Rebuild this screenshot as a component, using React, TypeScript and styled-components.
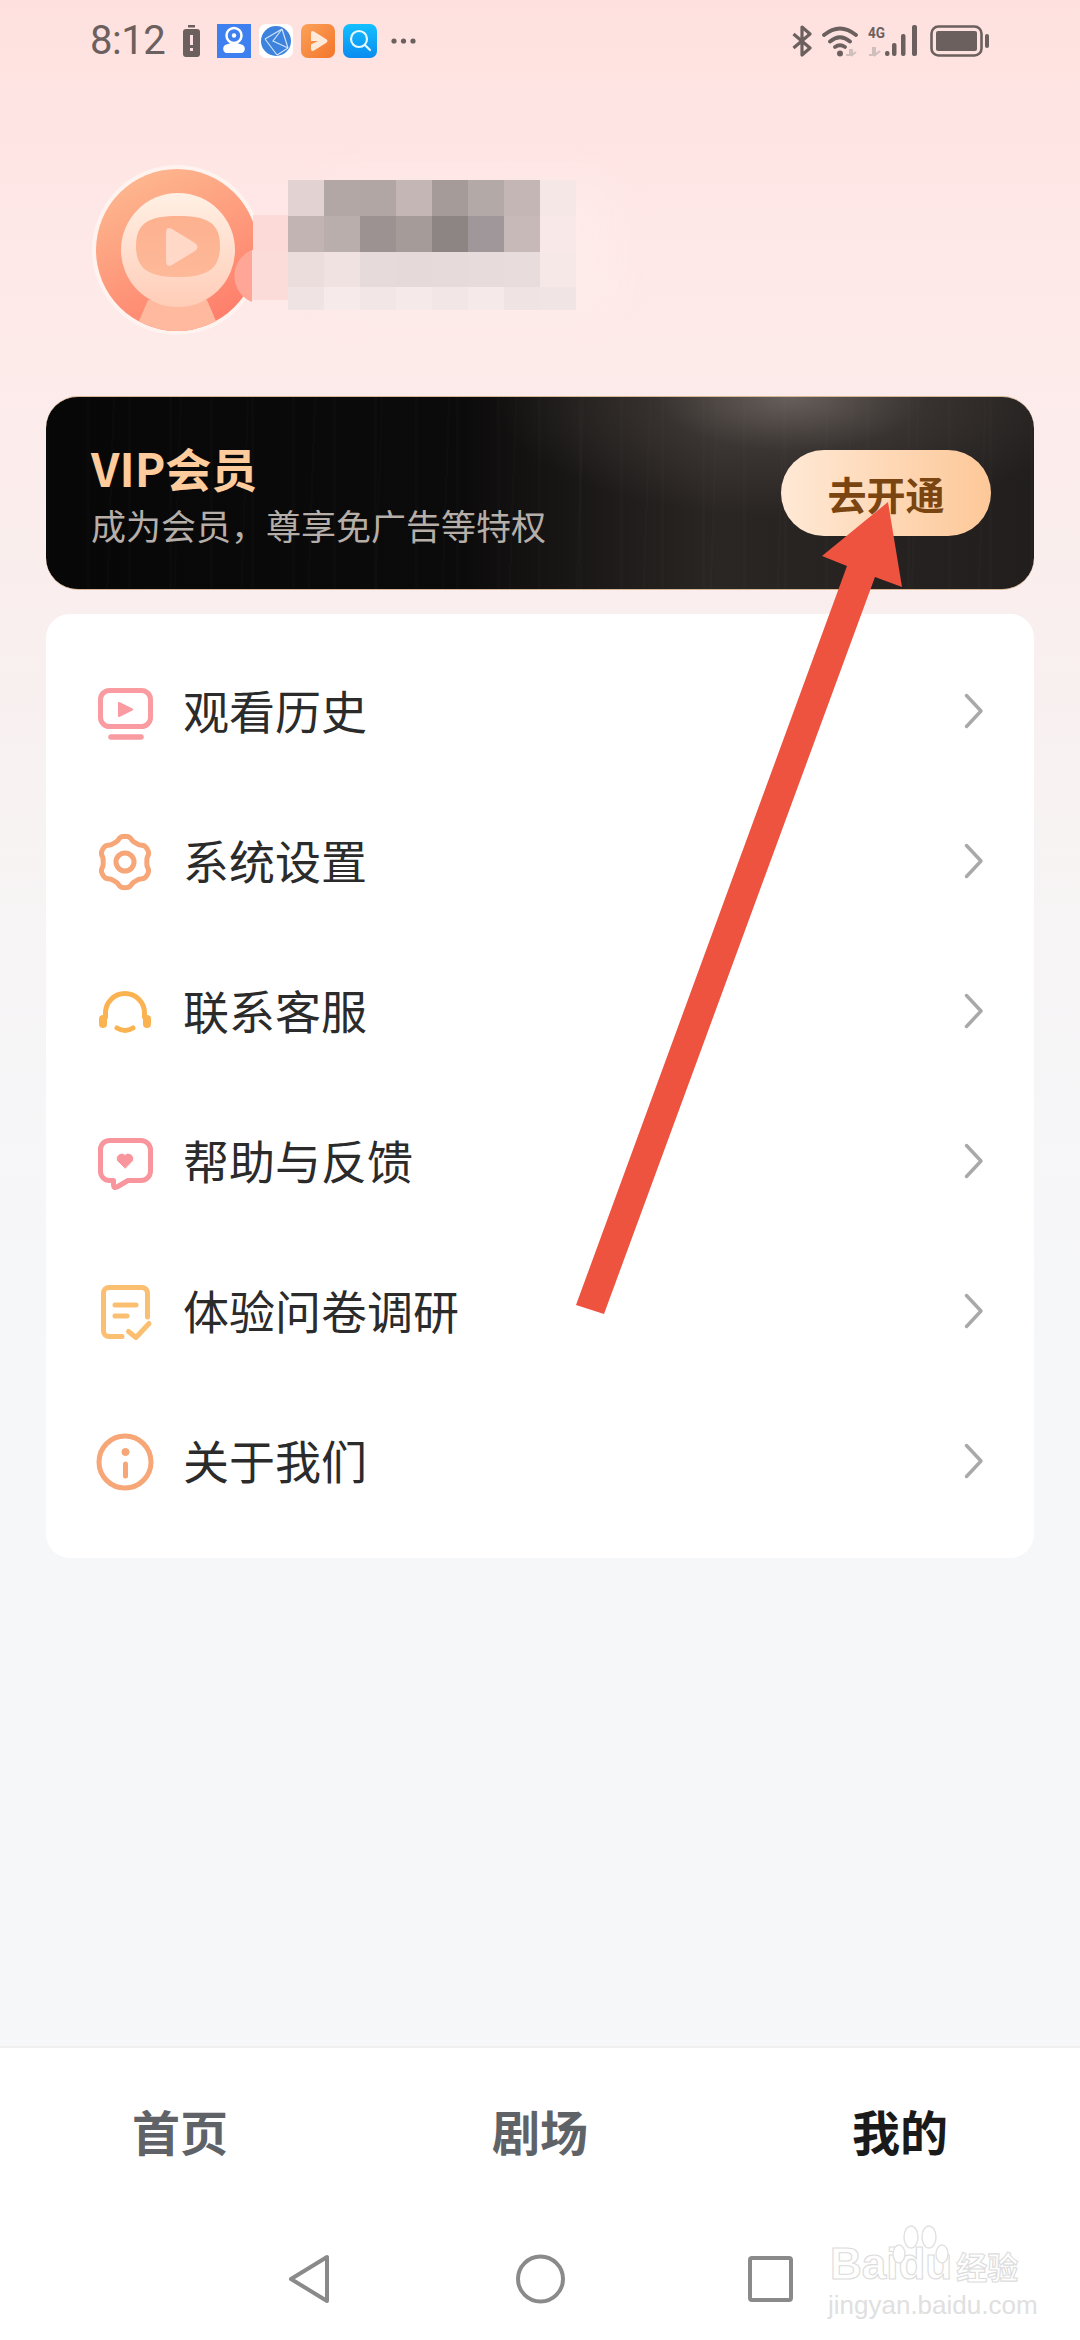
import styled, { createGlobalStyle } from "styled-components";

const GlobalStyle = createGlobalStyle`
  html, body {
    margin: 0;
    padding: 0;
    background: #f6f7f9;
  }
  * {
    box-sizing: border-box;
  }
`;

const Page = styled.div`
  position: relative;
  display: flex;
  flex-direction: column;
  width: 1080px;
  height: 2340px;
  overflow: hidden;
  font-family: "Noto Sans CJK SC", "Noto Sans", sans-serif;
  background: linear-gradient(
    180deg,
    #fee1df 0,
    #fee9e8 260px,
    #f9efee 620px,
    #f7f5f6 950px,
    #f6f7f9 1350px
  );
`;

const StatusBar = styled.div`
  display: flex;
  justify-content: space-between;
  align-items: center;
  height: 82px;
  padding: 0 91px 0 90px;
`;

const StatusGroup = styled.div`
  display: flex;
  align-items: center;
`;

const Time = styled.span`
  width: 75px;
  margin-right: 18px;
  font-family: Roboto, sans-serif;
  font-size: 40px;
  line-height: 38px;
  letter-spacing: -0.5px;
  color: #6b605e;
`;

const AppIcon = styled.svg<{ $gap?: number }>`
  display: block;
  width: 34px;
  height: 34px;
  margin-right: ${({ $gap }) => $gap ?? 8}px;
`;

const StatusGlyph = styled.svg<{ $gap?: number }>`
  display: block;
  margin-right: ${({ $gap }) => $gap ?? 0}px;
`;

const NetworkLabel = styled.text`
  font-family: Roboto, sans-serif;
  font-size: 15px;
  font-weight: 700;
  fill: #6b605e;
`;

const Profile = styled.div`
  display: flex;
  align-items: flex-start;
  height: 314px;
  padding: 83px 0 0 90px;
`;

const Avatar = styled.svg`
  display: block;
  width: 198px;
  height: 170px;
`;

const Mosaic = styled.div`
  display: grid;
  grid-template-columns: repeat(8, 36px);
  grid-template-rows: 36px 36px 35px 23px;
  margin-top: 15px;
  box-shadow: 36px 0 40px rgba(255, 240, 240, 0.4);
`;

const MosaicCell = styled.div<{ $bg: string }>`
  background: ${({ $bg }) => $bg};
`;

const VipCard = styled.div`
  display: flex;
  justify-content: space-between;
  align-items: center;
  height: 194px;
  margin: 0 46px;
  padding: 0 43px 0 45px;
  border-top: 1px solid #d8b796;
  border-bottom: 1px solid #d8b796;
  border-radius: 32px;
  background:
    radial-gradient(ellipse 300px 120px at 745px 0, rgba(125, 115, 110, 0.75) 0, rgba(90, 82, 78, 0.35) 45%, transparent 100%),
    repeating-linear-gradient(90deg, rgba(255, 255, 255, 0.012) 0 3px, transparent 3px 41px),
    repeating-linear-gradient(92deg, rgba(255, 255, 255, 0.01) 0 2px, transparent 2px 67px),
    linear-gradient(90deg, #070707 0, #0c0b0b 42%, #2a2624 68%, #211e1d 100%);
`;

const VipText = styled.div`
  display: flex;
  flex-direction: column;
`;

const VipTitle = styled.div`
  font-size: 46px;
  line-height: 56px;
  font-weight: 700;
  color: #fdcb9c;
`;

const VipSubtitle = styled.div`
  margin-top: 7px;
  font-size: 35px;
  line-height: 46px;
  color: #b6aea8;
`;

const OpenButton = styled.div`
  display: flex;
  justify-content: center;
  align-items: center;
  width: 210px;
  height: 86px;
  border-radius: 43px;
  font-size: 39px;
  font-weight: 700;
  color: #7a4510;
  background: linear-gradient(90deg, #ffe9d6 0, #fdc898 100%);
`;

const MenuCard = styled.div`
  display: flex;
  flex-direction: column;
  margin: 24px 46px 0;
  padding: 22px 0;
  border-radius: 24px;
  background: #ffffff;
`;

const MenuRow = styled.div`
  display: flex;
  align-items: center;
  height: 150px;
  padding: 0 50px 0 49px;
`;

const MenuIcon = styled.svg`
  display: block;
  width: 60px;
  height: 60px;
  flex-shrink: 0;
  fill: none;
  stroke-linecap: round;
  stroke-linejoin: round;
  stroke-width: 5;
`;

const MenuLabel = styled.span`
  flex: 1;
  margin-left: 28px;
  padding-bottom: 4px;
  font-size: 46px;
  line-height: 60px;
  color: #2b2b2b;
`;

const Chevron = styled.svg`
  display: block;
  width: 20px;
  height: 36px;
  fill: none;
  stroke: #a9a9a9;
  stroke-width: 3.5;
  stroke-linecap: round;
  stroke-linejoin: round;
`;

const Spacer = styled.div`
  flex: 1;
`;

const TabBar = styled.div`
  display: grid;
  grid-template-columns: repeat(3, 1fr);
  align-items: center;
  height: 171px;
  padding-bottom: 6px;
  border-top: 2px solid #f0f0f1;
  background: #ffffff;
`;

const Tab = styled.div<{ $active?: boolean }>`
  text-align: center;
  font-size: 48px;
  font-weight: 700;
  color: ${({ $active }) => ($active ? "#1a1a1a" : "#5f6368")};
`;

const NavBar = styled.div`
  display: flex;
  align-items: center;
  gap: 183px;
  height: 123px;
  padding: 0 0 0 288px;
  background: #ffffff;
`;

const NavIcon = styled.svg`
  display: block;
  fill: none;
  stroke: #8a8a8a;
  stroke-width: 4;
  stroke-linejoin: round;
`;

const Watermark = styled.div`
  position: absolute;
  left: 828px;
  top: 2225px;
  width: 200px;
  height: 95px;
`;

const WatermarkPaw = styled.svg`
  position: absolute;
  left: 62px;
  top: 0;
  width: 60px;
  height: 62px;
  fill: #ffffff;
  stroke: #e2e2e2;
  stroke-width: 1.5;
`;

const WatermarkBrand = styled.div`
  position: absolute;
  left: 2px;
  top: 14px;
  display: flex;
  align-items: baseline;
  font-family: "Liberation Sans", sans-serif;
  font-size: 44px;
  line-height: 50px;
  font-weight: 700;
  color: #ffffff;
  -webkit-text-stroke: 1.1px #dcdcdc;
`;

const WatermarkCn = styled.span`
  margin-left: 4px;
  font-family: "Noto Sans CJK SC", sans-serif;
  font-size: 31px;
`;

const WatermarkUrl = styled.div`
  position: absolute;
  left: 0;
  top: 67px;
  font-family: "Liberation Sans", sans-serif;
  font-size: 26px;
  line-height: 26px;
  color: #e0e0e0;
  white-space: nowrap;
`;

const ArrowOverlay = styled.svg`
  position: absolute;
  left: 560px;
  top: 490px;
  width: 360px;
  height: 840px;
`;

const mosaicColors = [
  "#e2d3d2", "#b3a7a5", "#b2a6a4", "#c4b6b5", "#a59b99", "#b3a9a7", "#c3b6b5", "#f5e7e6",
  "#c2b4b3", "#baaead", "#9c9291", "#a59c9a", "#8c8583", "#a0979a", "#c6b9b8", "#f8e8e7",
  "#eadddc", "#efe2e1", "#e6dada", "#e6d9d9", "#e6dada", "#e7dbdb", "#e8dcdc", "#f5e8e7",
  "#f0e3e3", "#f6eaea", "#f3e6e6", "#f5e9e9", "#f3e6e6", "#f5e9e9", "#f0e3e3", "#f1e4e4",
];

// six flat lobes, shallow dips between them
const gearPath = () => {
  const points: string[] = [];
  const steep = Math.tanh(1.6);
  for (let i = 0; i < 144; i++) {
    const a = (i / 144) * Math.PI * 2;
    const r = 23.75 + (1.9 * Math.tanh(1.6 * Math.cos(6 * a))) / steep;
    const x = 30 + r * Math.sin(a);
    const y = 31 - r * Math.cos(a);
    points.push(`${x.toFixed(2)} ${y.toFixed(2)}`);
  }
  return `M${points.join("L")}Z`;
};

const HistoryIcon = () => (
  <MenuIcon viewBox="0 0 60 60" stroke="#f99ba0">
    <rect x="5.5" y="9.5" width="50" height="36" rx="9" />
    <path d="M16 56H46" strokeWidth="5.5" />
    <path d="M24 22L37 28.5L24 35Z" fill="#f99ba0" strokeWidth="2" />
  </MenuIcon>
);

const SettingsIcon = () => (
  <MenuIcon viewBox="0 0 60 60" stroke="#f7a677">
    <path d={gearPath()} />
    <circle cx="30" cy="31" r="9" />
  </MenuIcon>
);

const ServiceIcon = () => (
  <MenuIcon viewBox="0 0 60 60" stroke="#fbb352">
    <path d="M10.5 36V32A19.5 19.5 0 0 1 49.5 32V36" />
    <path d="M8 38V43M52 38V43" strokeWidth="8" />
    <path d="M22 47Q30 52 38 47" />
  </MenuIcon>
);

const FeedbackIcon = () => (
  <MenuIcon viewBox="0 0 60 60" stroke="#f9959c">
    <path d="M14.5 9.5H46A9.5 9.5 0 0 1 55.5 19V40A9.5 9.5 0 0 1 46 49.5H33L22 56Q18.5 57.5 18.5 54V49.5H14.5A9 9 0 0 1 5.5 40V19A9 9 0 0 1 14.5 9.5Z" />
    <path d="M30 37L22.5 29.5A4.6 4.6 0 0 1 30 24.5A4.6 4.6 0 0 1 37.5 29.5Z" fill="#f9959c" strokeWidth="1" />
  </MenuIcon>
);

const SurveyIcon = () => (
  <MenuIcon viewBox="0 0 60 60" stroke="#fbbf72">
    <path d="M52.5 36V12A5.5 5.5 0 0 0 47 6.5H14A5.5 5.5 0 0 0 8.5 12V50A5.5 5.5 0 0 0 14 55.5H27" />
    <path d="M20 24H41M20 35H32" />
    <path d="M33.5 50.5L41 56.5L54 42.5" />
  </MenuIcon>
);

const AboutIcon = () => (
  <MenuIcon viewBox="0 0 60 60" stroke="#f7a677">
    <circle cx="30" cy="31" r="26" />
    <circle cx="30.5" cy="21" r="3.6" fill="#f7a677" strokeWidth="1" />
    <path d="M30.5 33V45" />
  </MenuIcon>
);

const menuItems = [
  { label: "观看历史", icon: <HistoryIcon /> },
  { label: "系统设置", icon: <SettingsIcon /> },
  { label: "联系客服", icon: <ServiceIcon /> },
  { label: "帮助与反馈", icon: <FeedbackIcon /> },
  { label: "体验问卷调研", icon: <SurveyIcon /> },
  { label: "关于我们", icon: <AboutIcon /> },
];

const StatusLeft = () => (
  <StatusGroup>
    <Time>8:12</Time>
    <StatusGlyph width="17" height="32" viewBox="0 0 17 32" $gap={17}>
      <rect x="5" y="0" width="7" height="2.5" fill="#6b605e" />
      <rect x="0" y="4" width="17" height="28" rx="3" fill="#6b605e" />
      <rect x="7" y="10" width="3" height="10" fill="#fde2df" />
      <rect x="7" y="23" width="3" height="3" fill="#fde2df" />
    </StatusGlyph>
    <AppIcon viewBox="0 0 34 34">
      <rect width="34" height="34" fill="#3f80f0" />
      <circle cx="17" cy="11.5" r="7.5" fill="none" stroke="#fff" strokeWidth="2.5" />
      <circle cx="17" cy="11.5" r="2.2" fill="#fff" />
      <path d="M9 29A4.5 4.5 0 0 1 9.5 20.5Q17 17 24.5 20.5A4.5 4.5 0 0 1 25 29Z" fill="#fff" />
    </AppIcon>
    <AppIcon viewBox="0 0 34 34">
      <rect width="34" height="34" rx="7" fill="#ffffff" />
      <circle cx="17" cy="17" r="15" fill="#3d82dc" />
      <path d="M6 15L23 5M6 15L18 31M23 5L29 24M29 24L18 31M23 5L14 17L29 24" fill="none" stroke="#cfe2f8" strokeWidth="1.2" />
    </AppIcon>
    <AppIcon viewBox="0 0 34 34">
      <defs>
        <linearGradient id="orangeApp" x1="0" y1="0" x2="1" y2="1">
          <stop offset="0" stopColor="#fca25a" />
          <stop offset="1" stopColor="#f3752a" />
        </linearGradient>
      </defs>
      <rect width="34" height="34" rx="7" fill="url(#orangeApp)" />
      <path d="M10 9Q10 6 13 7.5L25 15Q28 17 25 19L13 26.5Q10 28 10 25V20.5L17 17L10 17Z" fill="#ffe9d8" />
    </AppIcon>
    <AppIcon viewBox="0 0 34 34" $gap={14}>
      <defs>
        <linearGradient id="cyanApp" x1="0" y1="0" x2="0" y2="1">
          <stop offset="0" stopColor="#13c0ff" />
          <stop offset="1" stopColor="#0a8bf0" />
        </linearGradient>
      </defs>
      <rect width="34" height="34" rx="7" fill="url(#cyanApp)" />
      <circle cx="16" cy="15" r="8" fill="none" stroke="#e6f8ff" strokeWidth="2.2" />
      <path d="M22 21L27 26" stroke="#e6f8ff" strokeWidth="2.2" strokeLinecap="round" />
    </AppIcon>
    <StatusGlyph width="25" height="6" viewBox="0 0 25 6">
      <circle cx="3" cy="3" r="2.6" fill="#6b605e" />
      <circle cx="12.5" cy="3" r="2.6" fill="#6b605e" />
      <circle cx="22" cy="3" r="2.6" fill="#6b605e" />
    </StatusGlyph>
  </StatusGroup>
);

const StatusRight = () => (
  <StatusGroup>
    <StatusGlyph width="20" height="32" viewBox="0 0 20 32" $gap={10}>
      <path d="M1.5 9L18 23L10 30V2L18 9L1.5 23" fill="none" stroke="#6b605e" strokeWidth="3.2" strokeLinejoin="round" />
    </StatusGlyph>
    <StatusGlyph width="36" height="32" viewBox="0 0 36 32" $gap={10}>
      <path d="M2 10Q18 -3 34 10M8 16.5Q18 8 28 16.5M13 22Q18 18.5 23 22" fill="none" stroke="#6b605e" strokeWidth="3.8" strokeLinecap="round" />
      <circle cx="18" cy="28.5" r="3" fill="#6b605e" />
      <path d="M24 30H28V24M30 24V30L34 27" fill="none" stroke="#cfbfbd" strokeWidth="2" />
    </StatusGlyph>
    <StatusGlyph width="49" height="32" viewBox="0 0 49 32" $gap={13}>
      <NetworkLabel x="0" y="13" textLength="17" lengthAdjust="spacingAndGlyphs">4G</NetworkLabel>
      <path d="M1 30H5V22M7 22V30L12 26" fill="none" stroke="#cfbfbd" strokeWidth="2" />
      <rect x="17" y="26" width="4.5" height="5" rx="2" fill="#6b605e" />
      <rect x="24" y="18" width="4.5" height="13" rx="2" fill="#6b605e" />
      <rect x="33" y="9" width="4.5" height="22" rx="2" fill="#6b605e" />
      <rect x="44" y="0" width="5" height="31" rx="2" fill="#6b605e" />
    </StatusGlyph>
    <StatusGlyph width="59" height="32" viewBox="0 0 59 32">
      <rect x="1.5" y="1.5" width="50" height="29" rx="7" fill="none" stroke="#6b605e" strokeWidth="2.6" />
      <rect x="6" y="6" width="41" height="20" rx="2" fill="#6b605e" />
      <rect x="55" y="9" width="4" height="14" rx="2" fill="#6b605e" />
    </StatusGlyph>
  </StatusGroup>
);

const AvatarArt = () => (
  <Avatar viewBox="90 165 198 170">
    <defs>
      <linearGradient id="ringFill" x1="0.3" y1="0" x2="0.8" y2="1">
        <stop offset="0" stopColor="#fdb78f" />
        <stop offset="1" stopColor="#ff7a68" />
      </linearGradient>
      <linearGradient id="headFill" x1="0" y1="0" x2="0" y2="1">
        <stop offset="0" stopColor="#fff0e4" />
        <stop offset="1" stopColor="#ffcdb8" />
      </linearGradient>
      <linearGradient id="screenFill" x1="0" y1="0" x2="0" y2="1">
        <stop offset="0" stopColor="#fdb18f" />
        <stop offset="1" stopColor="#fdb999" />
      </linearGradient>
      <clipPath id="faceClip">
        <circle cx="177" cy="250" r="81" />
      </clipPath>
    </defs>
    <circle cx="177" cy="250" r="85" fill="#fff3f0" />
    <circle cx="177" cy="250" r="81" fill="url(#ringFill)" />
    <g clipPath="url(#faceClip)">
      <path d="M148 300H207L222 335H133Z" fill="#ffb99f" />
    </g>
    <circle cx="178" cy="250" r="57" fill="url(#headFill)" />
    <path d="M136 246C136 222 150 216 178 216C206 216 220 222 220 246C220 270 206 277 178 277C150 277 136 270 136 246Z" fill="url(#screenFill)" />
    <path d="M166 233Q166 226 172 229L195 243Q200 247 195 251L172 265Q166 268 166 261Z" fill="#ffd8c7" />
    <rect x="253" y="215" width="35" height="35" fill="#fcdad7" />
    <path d="M252 250A28 28 0 0 0 252 302Z" fill="#ffa696" />
    <rect x="252" y="250" width="36" height="50" fill="#fcdcd9" />
  </Avatar>
);

export default function App() {
  return (
    <Page>
      <GlobalStyle />
      <StatusBar>
        <StatusLeft />
        <StatusRight />
      </StatusBar>
      <Profile>
        <AvatarArt />
        <Mosaic>
          {mosaicColors.map((color, i) => (
            <MosaicCell key={i} $bg={color} />
          ))}
        </Mosaic>
      </Profile>
      <VipCard>
        <VipText>
          <VipTitle>VIP会员</VipTitle>
          <VipSubtitle>成为会员，尊享免广告等特权</VipSubtitle>
        </VipText>
        <OpenButton>去开通</OpenButton>
      </VipCard>
      <MenuCard>
        {menuItems.map((item) => (
          <MenuRow key={item.label}>
            {item.icon}
            <MenuLabel>{item.label}</MenuLabel>
            <Chevron viewBox="0 0 20 36">
              <path d="M2.5 2.5L17 18L2.5 33.5" />
            </Chevron>
          </MenuRow>
        ))}
      </MenuCard>
      <Spacer />
      <TabBar>
        <Tab>首页</Tab>
        <Tab>剧场</Tab>
        <Tab $active>我的</Tab>
      </TabBar>
      <NavBar>
        <NavIcon width="45" height="50" viewBox="0 0 45 50">
          <path d="M39 3V47L3 25Z" />
        </NavIcon>
        <NavIcon width="49" height="50" viewBox="0 0 49 50">
          <circle cx="24.5" cy="25" r="22.5" />
        </NavIcon>
        <NavIcon width="45" height="46" viewBox="0 0 45 46">
          <rect x="2" y="2" width="41" height="42" rx="2" />
        </NavIcon>
      </NavBar>
      <Watermark>
        <WatermarkBrand>
          Baidu<WatermarkCn>经验</WatermarkCn>
        </WatermarkBrand>
        <WatermarkPaw viewBox="0 0 60 62">
          <ellipse cx="21" cy="12" rx="7" ry="11" />
          <ellipse cx="39" cy="12" rx="7" ry="11" />
          <ellipse cx="9" cy="29" rx="6" ry="9" />
          <ellipse cx="52" cy="29" rx="6" ry="9" />
        </WatermarkPaw>
        <WatermarkUrl>jingyan.baidu.com</WatermarkUrl>
      </Watermark>
      <ArrowOverlay viewBox="560 490 360 840">
        <polygon
          points="888,502 902,587 875,577 604,1314 576,1305 847,566 822,556"
          fill="#ee5340"
        />
      </ArrowOverlay>
    </Page>
  );
}
